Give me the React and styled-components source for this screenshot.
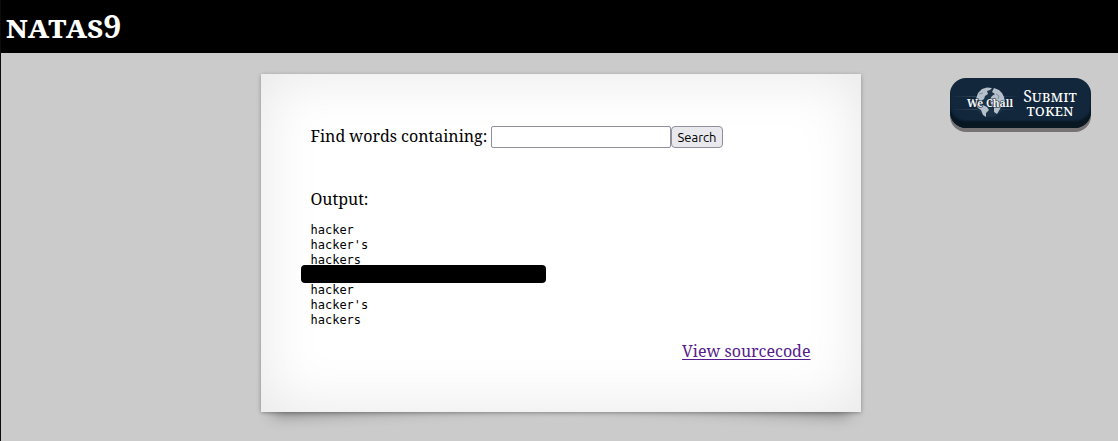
import React from 'react';
import styled, { createGlobalStyle } from 'styled-components';

const serif = `'Noto Serif', 'Droid Serif', 'DejaVu Serif Condensed', 'DejaVu Serif', serif`;

const GlobalStyle = createGlobalStyle`
  * { box-sizing: border-box; }
  html, body { margin: 0; background: #cbcbcb; }
  body { font-family: ${serif}; font-size: 16px; color: #000; overflow: hidden; }
`;

const Page = styled.div`
  height: 441px;
  border-left: 1px solid #0c0c0c;
  background: #cbcbcb;
`;

const Header = styled.h1`
  margin: 0;
  height: 53px;
  padding: 4px 0 0 5px;
  background: #000;
  color: #fff;
  font-size: 32px;
  line-height: 44px;
  font-variant: small-caps;
  white-space: nowrap;
`;

const Stage = styled.div`
  position: relative;
  display: flex;
  justify-content: center;
  padding: 21px 0 0 2px;
`;

const Paper = styled.main`
  position: relative;
  z-index: 0;
  width: 600px;
  height: 338px;
  &::before, &::after {
    content: '';
    position: absolute;
    z-index: -1;
    bottom: 13px;
    width: 50%;
    height: 20%;
    box-shadow: 0 8px 16px rgba(0, 0, 0, 0.42);
  }
  &::before { left: 14px; transform: skew(-5deg) rotate(-3deg); }
  &::after { right: 14px; transform: skew(5deg) rotate(3deg); }
`;

const Sheet = styled.div`
  display: flex;
  flex-direction: column;
  height: 100%;
  padding: 52px 50px 0;
  background: #fff;
  box-shadow: 0 1px 4px rgba(0, 0, 0, 0.3), inset 0 0 60px rgba(0, 0, 0, 0.1);
`;

const SearchForm = styled.form`
  display: flex;
  align-items: center;
  height: 22px;
`;

const Label = styled.label`
  width: 180px;
  padding-bottom: 2px;
  line-height: 22px;
  white-space: nowrap;
`;

const Field = styled.input`
  width: 180px;
  height: 22px;
  padding: 1px 2px;
  border: 1px solid #8f8f9d;
  border-radius: 2px;
  background: #fff;
`;

const SearchButton = styled.button`
  width: 52px;
  height: 22px;
  padding: 0 0 0 1px;
  border: 1px solid #8f8f9d;
  border-radius: 4px;
  background: #e9e9ed;
  color: #000;
  font: 13px/20px Ubuntu, 'Noto Sans', sans-serif;
`;

const OutputHeading = styled.div`
  margin-top: 40px;
  line-height: 22px;
`;

const Output = styled.pre`
  display: flex;
  flex-direction: column;
  margin: 13px 0 0;
  font: 12px/15px 'DejaVu Sans Mono', monospace;
`;

const Line = styled.span`
  height: 15px;
`;

const Redaction = styled.span`
  z-index: 1;
  width: 245px;
  height: 18px;
  margin: -3px 0 0 -10px;
  border-radius: 4px;
  background: #000;
`;

const SourceLink = styled.a`
  align-self: flex-end;
  margin-top: 12px;
  line-height: 22px;
  color: #551a8b;
  text-decoration: underline;
  text-underline-offset: 2px;
`;

const TokenButton = styled.a`
  position: absolute;
  top: 25px;
  right: 27px;
  display: flex;
  align-items: center;
  width: 141px;
  height: 50px;
  border-radius: 16px;
  background: #12273b;
  box-shadow: inset 0 -7px 2px #091723, 0 4px 0 #777374;
  color: #fff;
`;

const TokenText = styled.span`
  display: flex;
  flex-direction: column;
  width: 62px;
  margin-left: -1px;
  font-size: 16px;
  line-height: 14px;
  font-variant: small-caps;
  text-align: center;
`;

const Logo = () => (
  <svg width="70" height="44" viewBox="0 0 70 44">
    <defs>
      <linearGradient id="beam" x1="0" x2="1">
        <stop offset="0" stopColor="#5e7588" stopOpacity="0" />
        <stop offset=".5" stopColor="#7890a1" stopOpacity=".45" />
        <stop offset="1" stopColor="#5e7588" stopOpacity="0" />
      </linearGradient>
    </defs>
    <rect x="0" y="15" width="70" height="1" fill="url(#beam)" />
    <rect x="0" y="28" width="70" height="1" fill="url(#beam)" />
    <circle cx="40" cy="21.5" r="14.5" fill="#1c3347" />
    <path d="M26 18 L28 12 L32 8 L37 6.5 L42 7 L40 9 L37 10 L38 13 L35 15 L34 18 L31 20 L28 19Z M26 23 L31 23 L37 26 L39 29 L36 32 L36 36 L33 34 L31 29 L28 27Z M44 7 L49 9 L52 12 L54 16 L55 21 L52 23 L50 28 L47 33 L44 31 L44 26 L41 23 L40 18 L42 15 L45 13 L42 11Z" fill="#b6c0ca" />
    <path d="M46 13 L49 15 L48 18 M43 25 L48 26 M29 13 L33 12" fill="none" stroke="#7f91a1" strokeWidth="1" />
    <text x="17" y="25.5" textLength="46" lengthAdjust="spacingAndGlyphs" fill="#f5f7f8" stroke="#12273b" strokeWidth="1.2" paintOrder="stroke" fontFamily="Noto Serif, serif" fontWeight="700" fontSize="10.5">We Chall</text>
  </svg>
);

export default function App() {
  return (
    <Page>
      <GlobalStyle />
      <Header>natas9</Header>
      <Stage>
        <Paper>
          <Sheet>
            <SearchForm onSubmit={e => e.preventDefault()}>
              <Label htmlFor="needle">Find words containing:</Label>
              <Field id="needle" />
              <SearchButton>Search</SearchButton>
            </SearchForm>
            <OutputHeading>Output:</OutputHeading>
            <Output>
              <Line>hacker</Line>
              <Line>hacker's</Line>
              <Line>hackers</Line>
              <Redaction />
              <Line>hacker</Line>
              <Line>hacker's</Line>
              <Line>hackers</Line>
            </Output>
            <SourceLink>View sourcecode</SourceLink>
          </Sheet>
        </Paper>
        <TokenButton>
          <Logo />
          <TokenText><span>Submit</span><span>token</span></TokenText>
        </TokenButton>
      </Stage>
    </Page>
  );
}
